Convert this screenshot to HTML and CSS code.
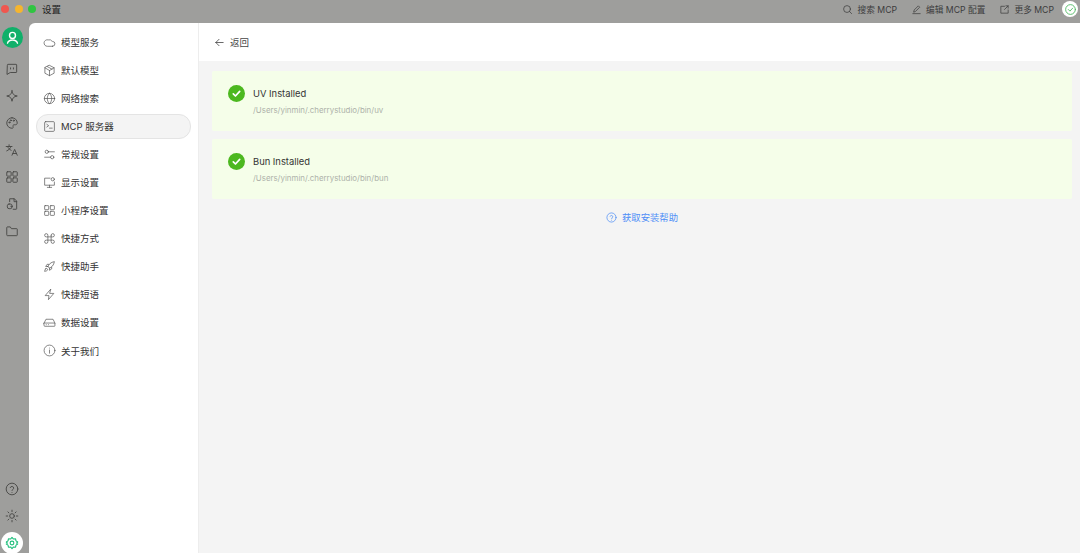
FILE: index.html
```html
<!DOCTYPE html>
<html lang="zh-CN">
<head>
    <meta charset="UTF-8">
    <title>设置</title>
    <link rel="stylesheet" href="styles.css">
</head>
<body>
    <header class="titlebar">
        <div class="lights">
            <span class="light red"></span>
            <span class="light yellow"></span>
            <span class="light green"></span>
        </div>
        <div class="window-title">设置</div>
        <div class="actions">
            <div class="action">
                <svg class="action-icon" viewBox="0 0 24 24"><circle cx="11" cy="11" r="7.5"/><path d="m21 21-4.6-4.6"/></svg>
                搜索 MCP
            </div>
            <div class="action">
                <svg class="action-icon" viewBox="0 0 24 24"><path d="M4 21h16"/><path d="M6 17l1-4L16 4l3 3-9 9z"/></svg>
                编辑 MCP 配置
            </div>
            <div class="action">
                <svg class="action-icon" viewBox="0 0 24 24"><path d="M20 13v7H4V5h8"/><path d="M12 12l8-8"/><path d="M15 4h5v5"/></svg>
                更多 MCP
            </div>
            <div class="status">
                <svg viewBox="0 0 24 24"><circle cx="12" cy="12" r="9"/><path d="m8 12 3 3 5-5.5"/></svg>
            </div>
        </div>
    </header>

    <div class="window">
        <nav class="rail">
            <div class="rail-top">
                <div class="avatar">
                    <svg viewBox="0 0 24 24"><circle cx="12" cy="9" r="4.2"/><path d="M5 20c1-3.500 3.500-4.500 7-4.500s6 1 7 4.500"/></svg>
                </div>
                <svg class="rail-icon" viewBox="0 0 24 24"><path d="M4 5a1 1 0 0 1 1-1h14a1 1 0 0 1 1 1v12a1 1 0 0 1-1 1H9l-5 3z"/><path d="M9.500 10v2M14.500 10v2"/></svg>
                <svg class="rail-icon" viewBox="0 0 24 24"><path d="M12 3c1 6 3 8 9 9-6 1-8 3-9 9-1-6-3-8-9-9 6-1 8-3 9-9z"/></svg>
                <svg class="rail-icon" viewBox="0 0 24 24"><path d="M12 3a9 9 0 0 0 0 18c2 0 2.500-1.500 1.800-2.800-.8-1.500.2-3.200 2-3.200H18c1.800 0 3-1.300 3-3 0-5-4-9-9-9z"/><circle cx="7.500" cy="11" r="1"/><circle cx="10" cy="7.500" r="1"/><circle cx="15" cy="8" r="1"/></svg>
                <svg class="rail-icon" viewBox="0 0 24 24"><path d="M2 6h10M7 3v3M10 6c-.8 3.500-3.500 6-7 7.500M4.500 6c1 3 3 5 6 6.500"/><path d="m12 21 4.500-10 4.500 10M13.500 18h6"/></svg>
                <svg class="rail-icon" viewBox="0 0 24 24"><rect x="3" y="3" width="7.500" height="7.500" rx="1"/><rect x="13.500" y="3" width="7.500" height="7.500" rx="1"/><rect x="3" y="13.500" width="7.500" height="7.500" rx="1"/><rect x="13.500" y="13.500" width="7.500" height="7.500" rx="1"/></svg>
                <svg class="rail-icon" viewBox="0 0 24 24"><path d="M8 8V3h8l4 4v13a1 1 0 0 1-1 1h-5"/><path d="M15.500 3v5H20"/><rect x="4" y="12" width="8" height="8" rx="3"/><path d="M10 16h3"/></svg>
                <svg class="rail-icon" viewBox="0 0 24 24"><path d="M3 6a1 1 0 0 1 1-1h5l2 3h9a1 1 0 0 1 1 1v10a1 1 0 0 1-1 1H4a1 1 0 0 1-1-1z"/></svg>
            </div>
            <div class="rail-bottom">
                <svg class="rail-icon" viewBox="0 0 24 24"><circle cx="12" cy="12" r="10"/><path d="M9 9.500a3 3 0 0 1 5.800 1c0 2-2.800 2.300-2.800 4"/><path d="M12 18h.01"/></svg>
                <svg class="rail-icon" viewBox="0 0 24 24"><circle cx="12" cy="12" r="4"/><path d="M12 2v2.500M12 19.500V22M2 12h2.500M19.500 12H22M5 5l1.700 1.700M17.300 17.300 19 19M5 19l1.700-1.700M17.300 6.700 19 5"/></svg>
                <div class="rail-active">
                    <svg viewBox="0 0 24 24"><path d="M12 2.500l2.500 2.700 3.600-.4.7 3.600 3 1.900-1.800 1.700 1.800 1.700-3 1.900-.7 3.600-3.600-.4L12 21.500l-2.500-2.700-3.600.4-.7-3.600-3-1.900L4 12 2.200 10.300l3-1.900.7-3.600 3.600.4z"/><circle cx="12" cy="12" r="3.200"/></svg>
                </div>
            </div>
        </nav>

        <div class="panel">
            <aside class="sidebar">
                <div class="menu-item">
                    <svg class="menu-icon" viewBox="0 0 24 24"><path d="M17.500 19H8a6 6 0 1 1 1.500-11.800A6.500 6.500 0 0 1 17 10h.5a4.500 4.500 0 0 1 0 9z"/></svg>
                    模型服务
                </div>
                <div class="menu-item">
                    <svg class="menu-icon" viewBox="0 0 24 24"><path d="M12 2.500l8.500 4.500v10L12 21.500 3.500 17V7z"/><path d="M3.500 7 12 12l8.500-5M12 12v9.500M8 4.800l8.500 4.700"/></svg>
                    默认模型
                </div>
                <div class="menu-item">
                    <svg class="menu-icon" viewBox="0 0 24 24"><circle cx="12" cy="12" r="9.500"/><path d="M2.500 12h19"/><path d="M12 2.500c3 3 4 6 4 9.500s-1 6.500-4 9.500c-3-3-4-6-4-9.500s1-6.500 4-9.500z"/></svg>
                    网络搜索
                </div>
                <div class="menu-item active">
                    <svg class="menu-icon" viewBox="0 0 24 24"><rect x="3" y="3" width="18" height="18" rx="2"/><path d="m7 8 3.500 2.500L7 13M12 15h5"/></svg>
                    MCP 服务器
                </div>
                <div class="menu-item">
                    <svg class="menu-icon" viewBox="0 0 24 24"><circle cx="7" cy="7" r="3"/><circle cx="17" cy="17" r="3"/><path d="M10 7h11M3 17h11"/></svg>
                    常规设置
                </div>
                <div class="menu-item">
                    <svg class="menu-icon" viewBox="0 0 24 24"><path d="M13 4H3v13h18v-6"/><path d="M12 17v4M8 21h8"/><circle cx="18" cy="6" r="3"/></svg>
                    显示设置
                </div>
                <div class="menu-item">
                    <svg class="menu-icon" viewBox="0 0 24 24"><rect x="3" y="3" width="7.500" height="7.500" rx="1"/><rect x="13.500" y="3" width="7.500" height="7.500" rx="1"/><rect x="3" y="13.500" width="7.500" height="7.500" rx="1"/><rect x="13.500" y="13.500" width="7.500" height="7.500" rx="1"/></svg>
                    小程序设置
                </div>
                <div class="menu-item">
                    <svg class="menu-icon" viewBox="0 0 24 24"><path d="M15 6v12a3 3 0 1 0 3-3H6a3 3 0 1 0 3 3V6a3 3 0 1 0-3 3h12a3 3 0 1 0-3-3"/></svg>
                    快捷方式
                </div>
                <div class="menu-item">
                    <svg class="menu-icon" viewBox="0 0 24 24"><path d="M9 12l3 3c4-1.500 8-5.500 9-12-6.500 1-10.500 5-12 9z"/><path d="M9 12H5l2.500-4H11M12 15v4l4-2.500V13"/><path d="M5 16c-1.500 1.300-2 5-2 5s3.700-.5 5-2c.8-.9.700-2-.1-2.800-.8-.8-2-.9-2.900-.2z"/></svg>
                    快捷助手
                </div>
                <div class="menu-item">
                    <svg class="menu-icon" viewBox="0 0 24 24"><path d="M14 2.500 4 14h7l-1 7.500L20 10h-7z"/></svg>
                    快捷短语
                </div>
                <div class="menu-item">
                    <svg class="menu-icon" viewBox="0 0 24 24"><path d="M2 13h20v5a1 1 0 0 1-1 1H3a1 1 0 0 1-1-1z"/><path d="M2 13 5.500 6h13L22 13"/><path d="M6 16h.01M10 16h.01"/></svg>
                    数据设置
                </div>
                <div class="menu-item">
                    <svg class="menu-icon" viewBox="0 0 24 24"><circle cx="12" cy="12" r="10"/><path d="M12 11v6M12 7.500h.01"/></svg>
                    关于我们
                </div>
            </aside>

            <main class="content">
                <div class="content-head">
                    <svg class="back-icon" viewBox="0 0 24 24"><path d="M20 12H4M11 5l-7 7 7 7"/></svg>
                    返回
                </div>
                <div class="content-body">
                    <div class="card">
                        <svg class="check" viewBox="0 0 24 24"><circle cx="12" cy="12" r="12"/><path d="m7.500 12.500 3 3 6-6.500"/></svg>
                        <div>
                            <div class="card-title">UV Installed</div>
                            <div class="card-path">/Users/yinmin/.cherrystudio/bin/uv</div>
                        </div>
                    </div>
                    <div class="card">
                        <svg class="check" viewBox="0 0 24 24"><circle cx="12" cy="12" r="12"/><path d="m7.500 12.500 3 3 6-6.500"/></svg>
                        <div>
                            <div class="card-title">Bun Installed</div>
                            <div class="card-path">/Users/yinmin/.cherrystudio/bin/bun</div>
                        </div>
                    </div>
                    <div class="help">
                        <svg class="help-icon" viewBox="0 0 24 24"><circle cx="12" cy="12" r="10"/><path d="M9 9.500a3 3 0 0 1 5.800 1c0 2-2.800 2.300-2.800 4"/><path d="M12 18h.01"/></svg>
                        获取安装帮助
                    </div>
                </div>
            </main>
        </div>
    </div>
</body>
</html>
```

FILE: styles.css
```css
* {
    box-sizing: border-box;
}
html, body {
    height: 100%;
}
body {
    margin: 0;
    background-color: #9e9e9c;
    font-family: 'Inter', 'Noto Sans CJK SC', sans-serif;
    color: #333;
    display: flex;
    flex-direction: column;
    overflow: hidden;
}
svg {
    fill: none;
    stroke: currentColor;
    stroke-width: 1.6;
    stroke-linecap: round;
    stroke-linejoin: round;
    flex-shrink: 0;
}

/* title bar */
.titlebar {
    height: 23px;
    flex-shrink: 0;
    display: flex;
    align-items: center;
}
.lights {
    display: flex;
    gap: 5.500px;
    padding-left: 1px;
    margin-top: -6px;
}
.light {
    width: 8px;
    height: 8px;
    border-radius: 50%;
}
.light.red { background-color: #f0574f; }
.light.yellow { background-color: #f5b52e; }
.light.green { background-color: #2fc541; }
.window-title {
    font-size: 9.500px;
    color: #222;
    margin-left: 6px;
    margin-top: -6px;
}
.actions {
    margin-left: auto;
    display: flex;
    align-items: center;
    gap: 14px;
    margin-top: -5px;
    color: #3c3c3c;
    font-size: 8.700px;
}
.action {
    display: flex;
    align-items: center;
    gap: 4px;
}
.action-icon {
    width: 11px;
    height: 11px;
}
.status {
    width: 16px;
    height: 16px;
    margin-left: -6px;
    margin-right: 2px;
    border-radius: 50%;
    background-color: #fff;
    color: #49b85e;
    display: flex;
    align-items: center;
    justify-content: center;
}
.status svg {
    width: 13px;
    height: 13px;
}

/* window */
.window {
    flex: 1;
    min-height: 0;
    display: flex;
}
.rail {
    width: 29px;
    flex-shrink: 0;
    display: flex;
    flex-direction: column;
    justify-content: space-between;
    align-items: center;
    padding-right: 5px;
    color: #484846;
}
.rail-top, .rail-bottom {
    display: flex;
    flex-direction: column;
    align-items: center;
}
.rail-top {
    padding-top: 4px;
    gap: 13px;
}
.rail-bottom {
    gap: 13px;
}
.avatar {
    width: 21px;
    height: 21px;
    border-radius: 50%;
    background-color: #10b06a;
    color: #fff;
    display: flex;
    align-items: center;
    justify-content: center;
    margin-bottom: 1px;
}
.avatar svg {
    width: 17px;
    height: 17px;
    stroke-width: 2;
}
.rail-icon {
    width: 14px;
    height: 14px;
}
.rail-active {
    width: 22px;
    height: 22px;
    border-radius: 50%;
    background-color: #fff;
    color: #1fbf7c;
    display: flex;
    align-items: center;
    justify-content: center;
    margin-top: -4px;
    margin-bottom: -1px;
}
.rail-active svg {
    width: 14px;
    height: 14px;
    stroke-width: 1.900;
}

/* settings panel */
.panel {
    flex: 1;
    min-width: 0;
    display: flex;
    background-color: #fff;
    border-top-left-radius: 6px;
    overflow: hidden;
}
.sidebar {
    width: 170px;
    flex-shrink: 0;
    border-right: 1px solid #ededed;
    padding: 6.500px 7px;
    display: flex;
    flex-direction: column;
    gap: 3.050px;
}
.menu-item {
    height: 25px;
    display: flex;
    align-items: center;
    gap: 5px;
    padding-left: 6px;
    font-size: 9.500px;
    color: #333;
    border: 1px solid transparent;
    border-radius: 12px;
}
.menu-item.active {
    background-color: #f4f4f4;
    border-color: #e4e4e4;
    width: 155px;
}
.menu-icon {
    width: 13px;
    height: 13px;
    color: #555;
    stroke-width: 1.300;
}

/* content */
.content {
    flex: 1;
    min-width: 0;
    display: flex;
    flex-direction: column;
}
.content-head {
    height: 38px;
    flex-shrink: 0;
    display: flex;
    align-items: center;
    gap: 5px;
    padding-left: 15px;
    font-size: 9.500px;
    color: #444;
}
.back-icon {
    width: 11px;
    height: 11px;
    color: #333;
}
.content-body {
    flex: 1;
    background-color: #f4f4f4;
    padding: 10px 8px 0 13px;
    display: flex;
    flex-direction: column;
    gap: 8px;
}
.card {
    height: 60px;
    background-color: #f5fee9;
    display: flex;
    align-items: center;
    gap: 8px;
    padding-left: 16px;
    border-radius: 2px;
}
.check {
    width: 17px;
    height: 17px;
    color: #fff;
    stroke-width: 2.400;
    margin-top: -15px;
}
.check circle {
    fill: #4cb81f;
    stroke: none;
}
.card-title {
    font-size: 9.400px;
    line-height: 14px;
    color: #333;
}
.card-path {
    font-size: 7.900px;
    line-height: 12px;
    margin-top: 3px;
    color: #aeb2aa;
}
.help {
    display: flex;
    align-items: center;
    justify-content: center;
    gap: 5px;
    font-size: 9.350px;
    color: #4e8ef7;
    margin-top: 2px;
    height: 16px;
}
.help-icon {
    width: 11px;
    height: 11px;
}
```
